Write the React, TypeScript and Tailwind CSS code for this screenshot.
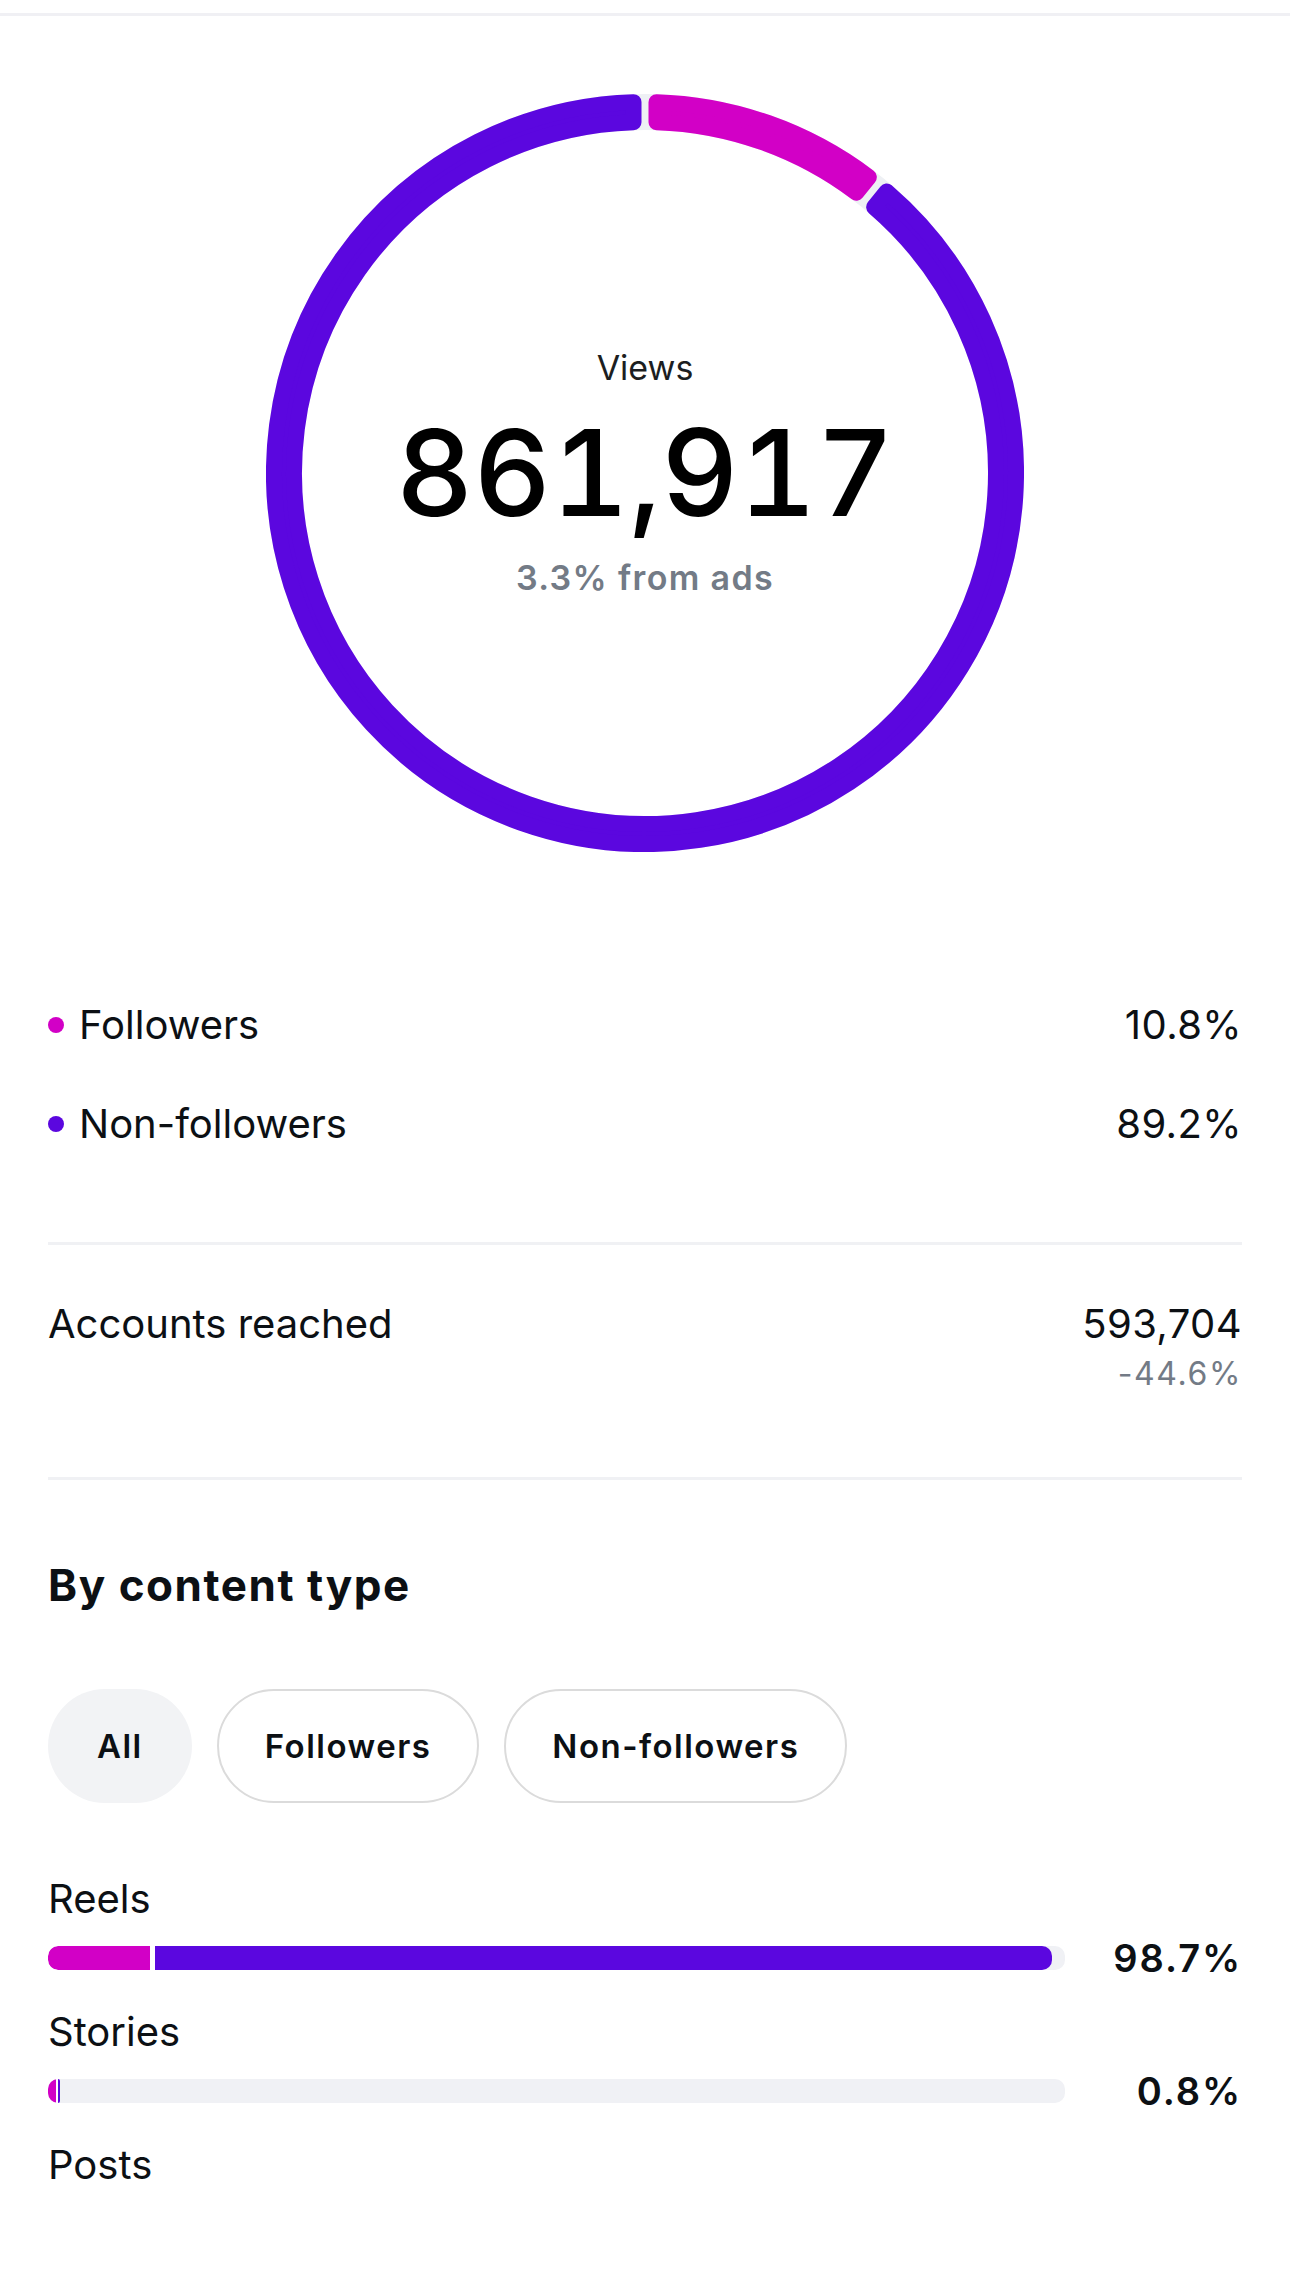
const PURPLE = "#5b07df";
const MAGENTA = "#d200c6";

type Pt = [number, number];

function polar(c: number, r: number, deg: number): Pt {
  const a = (deg * Math.PI) / 180;
  return [c + r * Math.sin(a), c - r * Math.cos(a)];
}

// Annular sector shrunk by `cr` on every side; stroking it with width 2*cr
// and round joins gives back the full sector with rounded corners.
function sector(c: number, ro: number, ri: number, from: number, to: number, gap: number, cr: number) {
  const o = ro - cr;
  const i = ri + cr;
  const dO = ((gap / 2 + cr) / o) * (180 / Math.PI);
  const dI = ((gap / 2 + cr) / i) * (180 / Math.PI);
  const [x1, y1] = polar(c, o, from + dO);
  const [x2, y2] = polar(c, o, to - dO);
  const [x3, y3] = polar(c, i, to - dI);
  const [x4, y4] = polar(c, i, from + dI);
  const large = to - from > 180 ? 1 : 0;
  return `M${x1} ${y1} A${o} ${o} 0 ${large} 1 ${x2} ${y2} L${x3} ${y3} A${i} ${i} 0 ${large} 0 ${x4} ${y4} Z`;
}

function ViewsRing() {
  const size = 758;
  const c = size / 2;
  const ro = 379;
  const ri = 343;
  const split = 360 * 0.108;
  const segments = [
    { from: 0, to: split, color: MAGENTA },
    { from: split, to: 360, color: PURPLE },
  ];
  return (
    <div className="relative w-[758px] h-[758px]">
      <svg width={size} height={size} viewBox={`0 0 ${size} ${size}`}>
        <circle cx={c} cy={c} r={(ro + ri) / 2} fill="none" stroke="#eef0f4" strokeWidth={ro - ri} />
        {segments.map((s) => (
          <path
            key={s.from}
            d={sector(c, ro, ri, s.from, s.to, 7, 8)}
            fill={s.color}
            stroke={s.color}
            strokeWidth={16}
            strokeLinejoin="round"
          />
        ))}
      </svg>
      <div className="absolute inset-0 flex flex-col items-center justify-center">
        <div className="text-[34px] leading-[40px] text-[#1c1e21]">Views</div>
        <div className="mt-[25px] text-[120px] leading-[120px] font-medium text-black tabular-nums">861,917</div>
        <div className="mt-[25px] text-[34px] leading-[40px] font-semibold text-[#737b86] tracking-[0.04em]">
          3.3% from ads
        </div>
      </div>
    </div>
  );
}

function LegendRow({ color, label, value }: { color: string; label: string; value: string }) {
  return (
    <div className="flex items-center justify-between h-[48px]">
      <div className="flex items-center gap-[15px]">
        <span className="w-[16px] h-[16px] rounded-full" style={{ backgroundColor: color }} />
        <span>{label}</span>
      </div>
      <span className="tracking-[0.01em]">{value}</span>
    </div>
  );
}

const contentTypes = [
  { label: "Reels", fill: 98.7, followers: 10.2, gap: 5, value: "98.7%" },
  { label: "Stories", fill: 1.2, followers: 62, gap: 2, value: "0.8%" },
  { label: "Posts" },
];

export default function App() {
  return (
    <div className="min-h-screen w-full bg-white text-[#0c1014] font-[Inter,sans-serif]">
      <div className="h-[13px]" />
      <div className="h-[3px] bg-[#f0f0f4]" />

      <div className="flex justify-center mt-[78px]">
        <ViewsRing />
      </div>

      <div className="px-[48px] text-[40px] leading-[48px]">
        <div className="mt-[149px] flex flex-col gap-[51px]">
          <LegendRow color={MAGENTA} label="Followers" value="10.8%" />
          <LegendRow color={PURPLE} label="Non-followers" value="89.2%" />
        </div>

        <div className="mt-[94px] h-[3px] bg-[#f0f1f4]" />

        <div className="mt-[55px] flex justify-between">
          <span>Accounts reached</span>
          <div className="flex flex-col items-end">
            <span className="tracking-[0.01em]">593,704</span>
            <span className="mt-[7px] text-[32px] leading-[38px] text-[#737b86] tracking-[0.05em]">-44.6%</span>
          </div>
        </div>

        <div className="mt-[84px] h-[3px] bg-[#f0f1f4]" />

        <h2 className="mt-[79px] text-[44px] leading-[52px] font-bold tracking-[0.035em]">By content type</h2>

        <div className="mt-[78px] flex gap-[25px] text-[33px] font-semibold tracking-[0.045em]">
          <button className="h-[114px] px-[47px] rounded-full bg-[#f2f3f5] border-2 border-transparent">All</button>
          <button className="h-[114px] px-[46px] rounded-full border-2 border-[#dbdbdb]">Followers</button>
          <button className="h-[114px] px-[46px] rounded-full border-2 border-[#dbdbdb]">Non-followers</button>
        </div>

        <div className="mt-[72px] flex flex-col">
          {contentTypes.map((t) => (
            <div key={t.label} className="mb-[26px]">
              <div>{t.label}</div>
              {t.fill !== undefined && (
                <div className="mt-[11px] flex items-center h-[48px]">
                  <div className="flex-1 h-[24px] rounded-[10px] bg-[#f0f1f5] overflow-hidden">
                    <div className="flex h-full" style={{ width: `${t.fill}%` }}>
                      <div className="h-full rounded-l-[10px]" style={{ width: `${t.followers}%`, backgroundColor: MAGENTA }} />
                      <div className="h-full bg-white" style={{ width: `${t.gap}px` }} />
                      <div className="h-full flex-1 rounded-r-[10px]" style={{ backgroundColor: PURPLE }} />
                    </div>
                  </div>
                  <div className="w-[177px] text-right text-[38px] font-semibold tracking-[0.05em]">{t.value}</div>
                </div>
              )}
            </div>
          ))}
        </div>
      </div>
    </div>
  );
}
